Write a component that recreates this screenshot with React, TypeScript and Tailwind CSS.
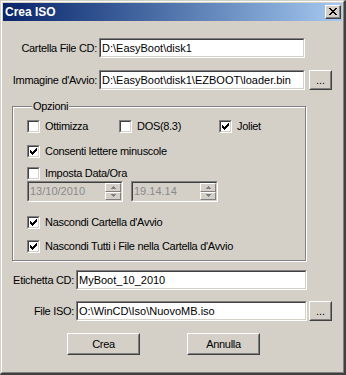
import type { ReactNode } from "react";

const font = "font-['Liberation_Sans',Arial,sans-serif]";

function Sunken({ className = "", children, disabled }: { className?: string; children?: ReactNode; disabled?: boolean }) {
  return (
    <div className={`border border-t-[#808080] border-l-[#808080] border-b-white border-r-white ${className}`}>
      <div
        className={`h-full border border-t-[#404040] border-l-[#404040] border-b-[#d4d0c8] border-r-[#d4d0c8] ${
          disabled ? "bg-[#d4d0c8]" : "bg-white"
        }`}
      >
        {children}
      </div>
    </div>
  );
}

function Raised({ className = "", children }: { className?: string; children?: ReactNode }) {
  return (
    <button className={`border border-t-white border-l-white border-b-[#404040] border-r-[#404040] bg-[#d4d0c8] p-0 ${className}`}>
      <div className="flex h-full items-center justify-center border border-t-[#d4d0c8] border-l-[#d4d0c8] border-b-[#808080] border-r-[#808080]">
        {children}
      </div>
    </button>
  );
}

function TextBox({ value, className = "" }: { value: string; className?: string }) {
  return (
    <Sunken className={`h-[20px] ${className}`}>
      <div className="overflow-hidden whitespace-nowrap pl-px leading-[16px]">{value}</div>
    </Sunken>
  );
}

// pixel check mark, 9x9 inner area
function CheckMark() {
  const cols: [number, number][] = [
    [1, 3],
    [2, 4],
    [3, 5],
    [4, 4],
    [5, 3],
    [6, 2],
    [7, 1],
  ];
  return (
    <svg width="9" height="9" viewBox="0 0 9 9" shapeRendering="crispEdges" className="block">
      {cols.map(([x, y]) => (
        <rect key={x} x={x} y={y} width="1" height="3" fill="#000" />
      ))}
    </svg>
  );
}

function Check({ checked, label, className = "" }: { checked?: boolean; label: string; className?: string }) {
  return (
    <div className={`flex h-[13px] items-center ${className}`}>
      <Sunken className="h-[13px] w-[13px] shrink-0">{checked ? <CheckMark /> : null}</Sunken>
      <span className="ml-[5px] whitespace-nowrap leading-[13px] tracking-[-0.3px]">{label}</span>
    </div>
  );
}

function Arrow({ up }: { up?: boolean }) {
  return (
    <svg width="5" height="3" viewBox="0 0 5 3" shapeRendering="crispEdges" className="block">
      {up ? (
        <>
          <rect x="2" y="0" width="1" height="1" fill="#808080" />
          <rect x="1" y="1" width="3" height="1" fill="#808080" />
          <rect x="0" y="2" width="5" height="1" fill="#808080" />
        </>
      ) : (
        <>
          <rect x="0" y="0" width="5" height="1" fill="#808080" />
          <rect x="1" y="1" width="3" height="1" fill="#808080" />
          <rect x="2" y="2" width="1" height="1" fill="#808080" />
        </>
      )}
    </svg>
  );
}

function SpinField({ value, className = "" }: { value: string; className?: string }) {
  return (
    <Sunken disabled className={`h-[21px] ${className}`}>
      <div className="flex h-full">
        <span className="flex-1 pl-px leading-[17px] text-[#8a8a8a]">{value}</span>
        <div className="flex w-[16px] flex-col">
          <div className="flex flex-1 items-center justify-center border border-t-white border-l-white border-b-[#808080] border-r-[#808080]">
            <Arrow up />
          </div>
          <div className="flex flex-1 items-center justify-center border border-t-white border-l-white border-b-[#808080] border-r-[#808080]">
            <Arrow />
          </div>
        </div>
      </div>
    </Sunken>
  );
}

function CloseGlyph() {
  const rows = ["11....11", ".11..11.", "..1111..", "...11...", "..1111..", ".11..11.", "11....11"];
  return (
    <svg width="8" height="7" viewBox="0 0 8 7" shapeRendering="crispEdges" className="block">
      {rows.flatMap((r, y) =>
        r.split("").map((c, x) => (c === "1" ? <rect key={`${x}-${y}`} x={x} y={y} width="1" height="1" fill="#000" /> : null))
      )}
    </svg>
  );
}

export default function App() {
  return (
    <div className={`h-[375px] w-[346px] text-[11px] text-black ${font}`}>
      <div className="h-full border border-t-[#d4d0c8] border-l-[#d4d0c8] border-b-2 border-r-2 border-b-[#404040] border-r-[#404040] bg-[#d4d0c8]">
        <div className="flex h-full flex-col border border-t-white border-l-white border-b-[#808080] border-r-[#808080] p-px">
          {/* title bar */}
          <div className="flex h-[18px] items-center bg-gradient-to-r from-[#0a246a] to-[#a6caf0] pl-[2px] pr-px">
            <span className="flex-1 text-[12px] font-bold text-white">Crea ISO</span>
            <button className="h-[14px] w-[16px] border border-t-white border-l-white border-b-[#404040] border-r-[#404040] bg-[#d4d0c8] p-0">
              <div className="flex h-full items-center justify-center border-b border-r border-b-[#808080] border-r-[#808080] pb-px">
                <CloseGlyph />
              </div>
            </button>
          </div>

          {/* body */}
          <div className="flex flex-col">
            <div className="mt-[17px] flex items-center">
              <span className="w-[94px] text-right tracking-[-0.3px]">Cartella File CD:</span>
              <TextBox value="D:\EasyBoot\disk1" className="ml-[2px] w-[206px]" />
            </div>
            <div className="mt-[12px] flex items-center">
              <span className="w-[94px] text-right tracking-[-0.3px]">Immagine d'Avvio:</span>
              <TextBox value="D:\EasyBoot\disk1\EZBOOT\loader.bin" className="ml-[2px] w-[206px]" />
              <Raised className="ml-[4px] h-[20px] w-[23px]">
                <span className="leading-none">...</span>
              </Raised>
            </div>

            <fieldset className="ml-[9px] mt-[10px] w-[294px] border border-[#808080] pb-[7px] pl-[14px] shadow-[inset_1px_1px_0_#fff,1px_1px_0_#fff]">
              <legend className="ml-[5px] bg-[#d4d0c8] px-px leading-[13px] tracking-[-0.3px]">Opzioni</legend>
              <div className="mt-[7px] flex">
                <Check label="Ottimizza" className="w-[92px]" />
                <Check label="DOS(8.3)" className="w-[100px]" />
                <Check label="Joliet" checked />
              </div>
              <Check label="Consenti lettere minuscole" checked className="mt-[12px]" />
              <Check label="Imposta Data/Ora" className="mt-[9px]" />
              <div className="mt-px flex gap-[8px]">
                <SpinField value="13/10/2010" className="w-[96px]" />
                <SpinField value="19.14.14" className="w-[87px]" />
              </div>
              <Check label="Nascondi Cartella d'Avvio" checked className="mt-[14px]" />
              <Check label="Nascondi Tutti i File nella Cartella d'Avvio" checked className="mt-[11px]" />
            </fieldset>

            <div className="mt-[9px] flex items-center">
              <span className="w-[71px] text-right tracking-[-0.3px]">Etichetta CD:</span>
              <TextBox value="MyBoot_10_2010" className="ml-[2px] w-[231px]" />
            </div>
            <div className="mt-[11px] flex items-center">
              <span className="w-[71px] text-right tracking-[-0.3px]">File ISO:</span>
              <TextBox value="O:\WinCD\Iso\NuovoMB.iso" className="ml-[2px] w-[231px]" />
              <Raised className="ml-[2px] h-[20px] w-[23px]">
                <span className="leading-none">...</span>
              </Raised>
            </div>

            <div className="mt-[12px] flex">
              <Raised className="ml-[64px] h-[22px] w-[73px]">
                <span className="tracking-[-0.3px]">Crea</span>
              </Raised>
              <Raised className="ml-[47px] h-[22px] w-[73px]">
                <span className="tracking-[-0.3px]">Annulla</span>
              </Raised>
            </div>
          </div>
        </div>
      </div>
    </div>
  );
}
